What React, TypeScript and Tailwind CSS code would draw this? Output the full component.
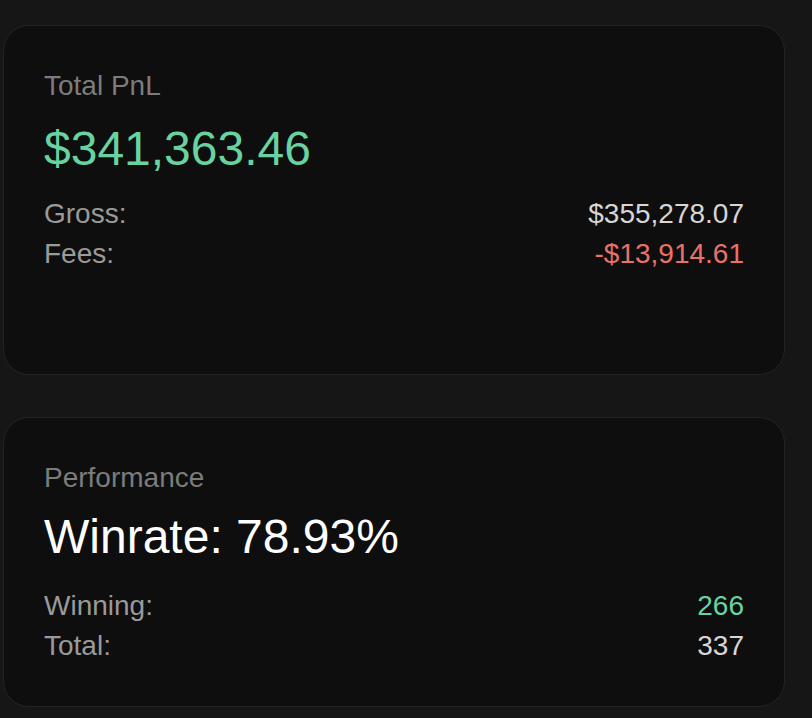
export default function App() {
  return (
    <div
      className="min-h-[718px] bg-[#161616] pl-[3px] pr-[27px] pt-[25px] pb-[12px] flex flex-col gap-[42px]"
      style={{ fontFamily: '"Liberation Sans", Arial, sans-serif' }}
    >
      {/* PnL card */}
      <div className="h-[350px] rounded-[26px] border border-[#232323] bg-[#0e0e0e] p-[40px]">
        <div className="text-[28px] leading-[40px] text-[#7c7c7c]">Total PnL</div>
        <div className="mt-[11px] mb-[13px] text-[48px] leading-[64px] text-[#68d3a0]">$341,363.46</div>
        <div className="flex flex-col text-[28px] leading-[40px]">
          <div className="flex justify-between">
            <span className="text-[#9a9a9a]">Gross:</span>
            <span className="text-[#d6d6d6]">$355,278.07</span>
          </div>
          <div className="flex justify-between">
            <span className="text-[#9a9a9a]">Fees:</span>
            <span className="text-[#e8726a]">-$13,914.61</span>
          </div>
        </div>
      </div>

      {/* Performance card */}
      <div className="rounded-[26px] border border-[#232323] bg-[#0e0e0e] p-[40px]">
        <div className="text-[28px] leading-[40px] text-[#7c7c7c]">Performance</div>
        <div className="mt-[7px] mb-[17px] text-[48px] leading-[64px] text-white">Winrate: 78.93%</div>
        <div className="flex flex-col text-[28px] leading-[40px]">
          <div className="flex justify-between">
            <span className="text-[#9a9a9a]">Winning:</span>
            <span className="text-[#68d3a0]">266</span>
          </div>
          <div className="flex justify-between">
            <span className="text-[#9a9a9a]">Total:</span>
            <span className="text-[#d6d6d6]">337</span>
          </div>
        </div>
      </div>
    </div>
  );
}
